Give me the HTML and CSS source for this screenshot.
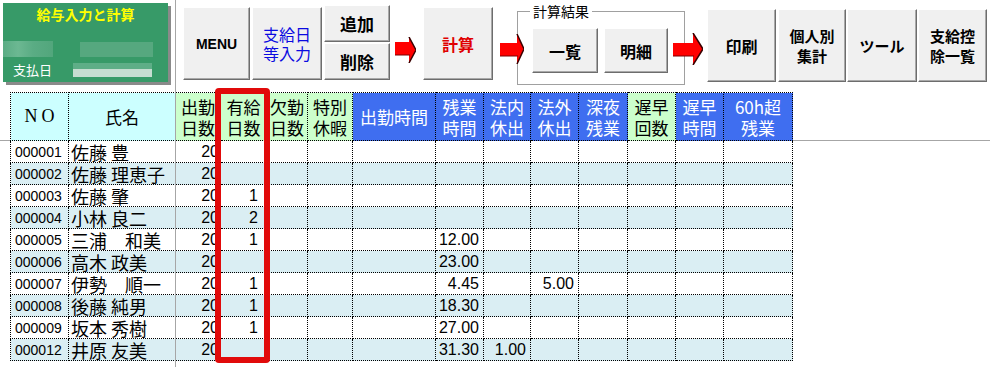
FILE: index.html
```html
<!DOCTYPE html>
<html lang="ja">
<head>
  <meta charset="UTF-8">
  <title>給与入力と計算</title>
  <link rel="stylesheet" href="styles.css">
</head>
<body>
<div class="sheet">
  <div class="toolbar">
    <div class="card">
      <div class="card-title">給与入力と計算</div>
      <div class="card-row">
        <span class="blur blur-a"></span>
        <span class="blur blur-b"></span>
      </div>
      <div class="card-row">
        <span class="card-label">支払日</span>
        <span class="blur blur-date"></span>
      </div>
    </div>

    <button class="btn btn-menu">MENU</button>
    <button class="btn btn-entry">支給日<br>等入力</button>
    <div class="stack">
      <button class="btn btn-half">追加</button>
      <button class="btn btn-half">削除</button>
    </div>

    <svg class="arrow arrow-1" width="21" height="26" viewBox="0 0 21 26">
      <rect x="0" y="5" width="15" height="13" fill="#ff0000"/>
      <polygon points="14,0 21,13 14,26" fill="#ff0000"/>
      <polyline points="14,0 21,13 14,26" fill="none" stroke="#3a0000" stroke-width="1.5"/>
      <line x1="0" y1="18" x2="15" y2="18" stroke="#7a0000" stroke-width="1"/>
    </svg>

    <button class="btn btn-calc">計算</button>

    <svg class="arrow arrow-2" width="24" height="30" viewBox="0 0 24 30">
      <rect x="0" y="9" width="18" height="13" fill="#ff0000"/>
      <polygon points="17,0 24,15 17,30" fill="#ff0000"/>
      <polyline points="17,0 24,15 17,30" fill="none" stroke="#3a0000" stroke-width="1.5"/>
      <line x1="0" y1="22" x2="18" y2="22" stroke="#7a0000" stroke-width="1"/>
    </svg>

    <div class="group">
      <span class="group-label">計算結果</span>
      <button class="btn btn-result">一覧</button>
      <button class="btn btn-result btn-detail">明細</button>
    </div>

    <svg class="arrow arrow-3" width="30" height="32" viewBox="0 0 30 32">
      <rect x="0" y="10" width="21" height="13" fill="#ff0000"/>
      <polygon points="20,0 30,16 20,32" fill="#ff0000"/>
      <polyline points="20,0 30,16 20,32" fill="none" stroke="#3a0000" stroke-width="1.5"/>
      <line x1="0" y1="23" x2="21" y2="23" stroke="#7a0000" stroke-width="1"/>
    </svg>

    <button class="btn btn-print">印刷</button>
    <button class="btn btn-two btn-person">個人別<br>集計</button>
    <button class="btn btn-tool">ツール</button>
    <button class="btn btn-two btn-list">支給控<br>除一覧</button>
  </div>

  <div class="grid">
    <table class="pay" id="payTable">
      <colgroup>
        <col style="width:58px"><col style="width:107px"><col style="width:45px"><col style="width:46px">
        <col style="width:41px"><col style="width:45px"><col style="width:83px"><col style="width:48px">
        <col style="width:47px"><col style="width:48px"><col style="width:49px"><col style="width:48px">
        <col style="width:48px"><col style="width:69px">
      </colgroup>
      <thead>
        <tr>
          <th class="h-cyan h-no">NO</th>
          <th class="h-cyan">氏名</th>
          <th class="h-green">出勤<br>日数</th>
          <th class="h-green">有給<br>日数</th>
          <th class="h-green">欠勤<br>日数</th>
          <th class="h-green">特別<br>休暇</th>
          <th class="h-blue">出勤時間</th>
          <th class="h-blue">残業<br>時間</th>
          <th class="h-blue">法内<br>休出</th>
          <th class="h-blue">法外<br>休出</th>
          <th class="h-blue">深夜<br>残業</th>
          <th class="h-green">遅早<br>回数</th>
          <th class="h-blue">遅早<br>時間</th>
          <th class="h-blue">60h超<br>残業</th>
        </tr>
      </thead>
      <tbody></tbody>
    </table>
    <div class="highlight"></div>
  </div>

  <div class="freeze freeze-v"></div>
  <div class="freeze freeze-h"></div>
</div>

<script>
  // Employee rows for the current pay period
  const staff = [
    { no: '000001', name: '佐藤 豊', days: '20' },
    { no: '000002', name: '佐藤 理恵子', days: '20' },
    { no: '000003', name: '佐藤 肇', days: '20', paid: '1' },
    { no: '000004', name: '小林 良二', days: '20', paid: '2' },
    { no: '000005', name: '三浦　和美', days: '20', paid: '1', over: '12.00' },
    { no: '000006', name: '高木 政美', days: '20', over: '23.00' },
    { no: '000007', name: '伊勢　順一', days: '20', paid: '1', over: '4.45', outside: '5.00' },
    { no: '000008', name: '後藤 純男', days: '20', paid: '1', over: '18.30' },
    { no: '000009', name: '坂本 秀樹', days: '20', paid: '1', over: '27.00' },
    { no: '000012', name: '井原 友美', days: '20', over: '31.30', inside: '1.00' }
  ];

  const tbody = document.querySelector('#payTable tbody');

  staff.forEach((s, i) => {
    const row = document.createElement('tr');
    row.className = i % 2 ? 'alt' : '';
    row.innerHTML = `
      <td class="c-no">${s.no}</td>
      <td class="c-name">${s.name}</td>
      <td class="num c-days">${s.days || ''}</td>
      <td class="num c-paid">${s.paid || ''}</td>
      <td class="num"></td>
      <td class="num"></td>
      <td class="num"></td>
      <td class="num">${s.over || ''}</td>
      <td class="num">${s.inside || ''}</td>
      <td class="num">${s.outside || ''}</td>
      <td class="num"></td>
      <td class="num"></td>
      <td class="num"></td>
      <td class="num"></td>
    `;
    tbody.appendChild(row);
  });
</script>
</body>
</html>
```

FILE: styles.css
```css
body { margin: 0; background: #fff; font-family: "Noto Sans CJK JP", sans-serif; }
.sheet { position: relative; width: 990px; height: 367px; overflow: hidden; }

/* top control strip */
.toolbar { display: flex; align-items: flex-start; height: 92px; }

.card { display: flex; flex-direction: column; width: 165px; height: 79px; margin: 3px 0 0 3px; background: #379a68; box-shadow: 3px 3px 0 #8a8a8a; }
.card-title { height: 22px; padding-top: 2px; box-sizing: border-box; text-align: center; color: #ffff00; font-weight: bold; font-size: 14px; line-height: 18px; }
.card-row { display: flex; align-items: center; }
.card-row:nth-child(2) { margin-top: 15px; height: 18px; }
.card-row:nth-child(3) { margin-top: 4px; height: 16px; }
.blur { display: block; }
.blur-a { width: 50px; height: 16px; background: linear-gradient(90deg, #5aac84 0, #6cb892 30%, #5aac84 60%, #52a67c 100%); }
.blur-b { width: 73px; height: 15px; margin-left: 27px; background: #56a87f; }
.card-label { padding-left: 10px; color: #fff; font-size: 13px; line-height: 16px; }
.blur-date { width: 79px; height: 14px; margin-left: 21px; background: linear-gradient(180deg, #5eae87 0, #5eae87 40%, #c6ddd1 40%, #c6ddd1 100%); }

.btn { padding: 0; background: #f0f0f0; border: 1px solid; border-color: #fff #6d6d6d #6d6d6d #fff; box-shadow: inset -1px -1px 0 #a9a9a9; font-family: "Noto Sans CJK JP", sans-serif; font-weight: bold; font-size: 16px; color: #000; line-height: 20px; cursor: pointer; }
.btn-menu { width: 67px; height: 73px; margin: 7px 0 0 15px; font-family: "Liberation Sans", sans-serif; font-size: 14px; }
.btn-entry { width: 70px; height: 73px; margin: 7px 0 0 2px; color: #0a0ae0; font-weight: normal; font-size: 16px; line-height: 19px; }
.stack { display: flex; flex-direction: column; gap: 1px; margin: 5px 0 0 2px; }
.btn-half { width: 66px; height: 37px; font-size: 17px; }
.btn-calc { width: 70px; height: 73px; margin: 7px 0 0 7px; color: #e00000; }
.btn-result { width: 66px; height: 45px; }
.btn-detail { width: 64px; margin-left: 6px; }
.btn-print { width: 69px; height: 73px; margin: 9px 0 0 4px; }
.btn-two { height: 73px; margin-top: 9px; font-size: 15px; line-height: 20px; }
.btn-person { width: 68px; margin-left: 2px; }
.btn-tool { width: 70px; height: 73px; margin: 9px 0 0 1px; font-size: 15px; }
.btn-list { width: 69px; margin-left: 1px; }

.arrow { position: relative; z-index: 2; flex: none; }
.arrow-1 { margin: 37px 0 0 5px; }
.arrow-2 { margin: 34px 0 0 7px; }
.arrow-3 { margin: 33px 0 0 -12px; }

.group { position: relative; display: flex; box-sizing: border-box; width: 168px; height: 74px; margin: 11px 0 0 -7px; padding: 16px 0 0 14px; border: 1px solid #a0a0a0; }
.group-label { position: absolute; top: -10px; left: 12px; padding: 0 3px; background: #fff; font-size: 14px; line-height: 18px; }

/* payroll grid */
.grid { position: relative; margin-left: 10px; }
.pay { border-collapse: collapse; table-layout: fixed; width: 782px; background: #fff; font-family: "Liberation Sans", "Noto Sans CJK JP", sans-serif; }
.pay th, .pay td { border: 1px dotted #000; padding: 0; white-space: nowrap; }
.pay thead tr { height: 48px; }
.pay th { font-family: "Noto Sans CJK JP", sans-serif; font-weight: normal; font-size: 17px; line-height: 21px; text-align: center; vertical-align: middle; }
.h-cyan { background: #ccffff; }
.h-green { background: #ccffcc; }
.h-blue { background: #3f6ef0; color: #fff; }
.pay th.h-no { font-family: "Liberation Serif", serif; font-size: 18px; letter-spacing: 4px; padding-left: 4px; }

.pay tbody tr { height: 22px; }
.pay tbody tr.alt { background: #daeef3; }
.pay td { font-size: 16px; line-height: 20px; }
.c-no { padding-left: 4px !important; font-size: 14px !important; }
.c-name { padding-left: 2px !important; font-family: "Noto Sans CJK JP", sans-serif; font-size: 18px !important; }
.num { text-align: right; padding-right: 4px !important; }
.c-days { padding-right: 1px !important; }
.c-paid { padding-right: 8px !important; }

.highlight { position: absolute; left: 205px; top: -4px; width: 55px; height: 275px; box-sizing: border-box; border: 6px solid #e10a0a; border-radius: 4px; }

/* frozen pane lines */
.freeze { position: absolute; background: #a6a6a6; }
.freeze-v { left: 175px; top: 0; width: 1px; height: 367px; z-index: 3; }
.freeze-h { left: 0; top: 140px; width: 990px; height: 1px; z-index: -1; }
```
